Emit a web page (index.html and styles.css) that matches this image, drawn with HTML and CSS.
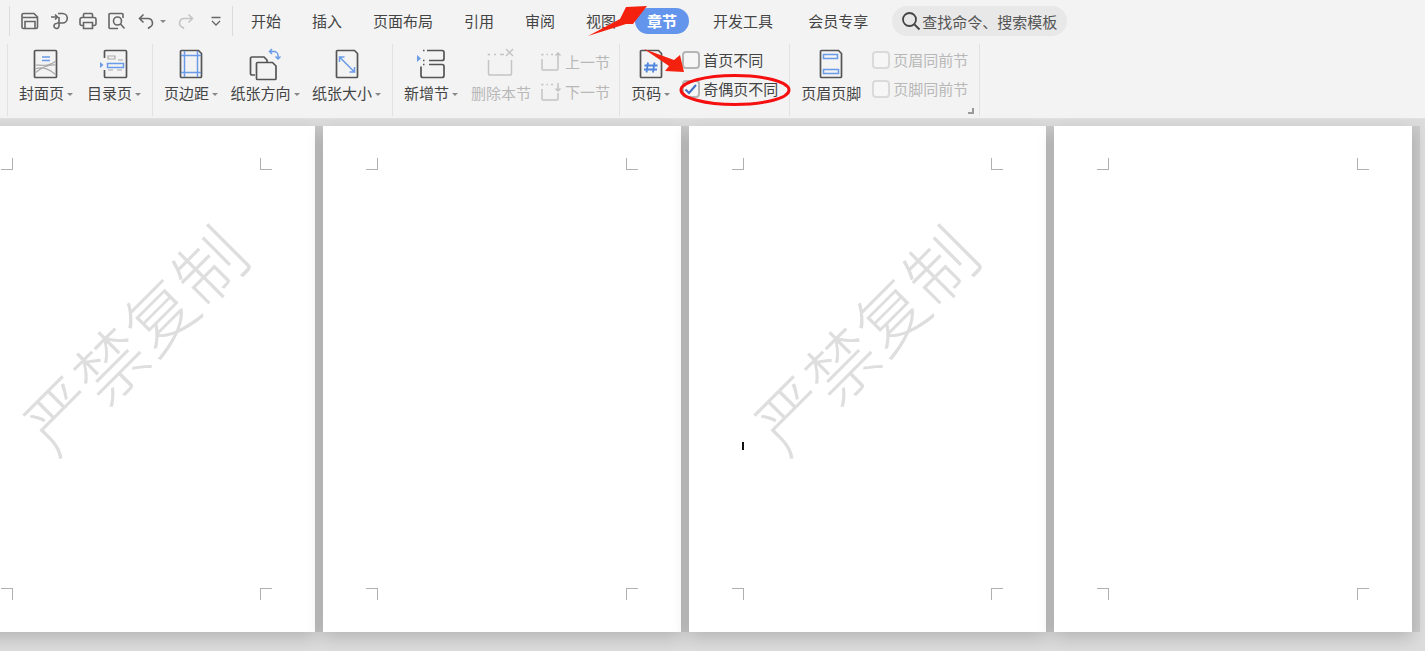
FILE: index.html
```html
<!doctype html>
<html lang="zh-CN">
  <head>
    <meta charset="UTF-8" />
    <title>章节 - 文档</title>
    <link rel="stylesheet" href="styles.css">
  </head>
  <body>
    <header class="ribbon">
      <div class="topbar">
        <div class="quick-access">
          <svg class="qa-icon" viewBox="0 0 18 18"><path d="M2.5 1.5h10.5l3.5 3.500v10a1.500 1.500 0 0 1-1.500 1.500h-12.500a1.500 1.500 0 0 1-1.500-1.500v-12a1.500 1.500 0 0 1 1.500-1.500z"/><path d="M1.500 5.500h15M4 16.500v-7h10v7"/></svg>
          <svg class="qa-icon" viewBox="0 0 18 18"><path d="M1 5h6M5 2.500l2.500 2.500-2.500 2.500M8 1.500h4.500a4.500 4.500 0 0 1 0 9.500h-5.500M9 5v9a2.500 2.500 0 1 1-2-2.500"/></svg>
          <svg class="qa-icon" viewBox="0 0 18 18"><path d="M4.500 5.500v-3a1 1 0 0 1 1-1h7a1 1 0 0 1 1 1v3M4 13.500h-1a2 2 0 0 1-2-2v-4a2 2 0 0 1 2-2h12a2 2 0 0 1 2 2v4a2 2 0 0 1-2 2h-1M4.500 10.500h9v6h-9z"/></svg>
          <svg class="qa-icon" viewBox="0 0 18 18"><path d="M15 6v-3.500a1 1 0 0 0-1-1h-12a1 1 0 0 0-1 1v13a1 1 0 0 0 1 1h8"/><circle cx="9.500" cy="9" r="4"/><path d="M12.500 12l4 4.500"/></svg>
          <svg class="qa-icon" viewBox="0 0 18 18"><path d="M6.500 2.500l-4 4 4 4M3 6.500h8a4.500 4.500 0 0 1 2 8.500l-2 1.500"/></svg>
          <span class="caret caret-undo"></span>
          <svg class="qa-icon qa-off" viewBox="0 0 18 18"><path d="M11.500 2.500l4 4-4 4M15 6.500h-8a4.500 4.500 0 0 0-2 8.500l2 1.500"/></svg>
          <svg class="qa-icon qa-more" viewBox="0 0 18 18"><path d="M4.500 5.500h9M5 9l4 4 4-4"/></svg>
        </div>
        <nav class="tabs">
          <a class="tab">开始</a>
          <a class="tab">插入</a>
          <a class="tab">页面布局</a>
          <a class="tab">引用</a>
          <a class="tab">审阅</a>
          <a class="tab">视图</a>
          <a class="tab tab-active">章节</a>
          <a class="tab tab-dev">开发工具</a>
          <a class="tab tab-vip">会员专享</a>
        </nav>
        <div class="search">
          <svg width="20" height="20" viewBox="0 0 20 20" class="search-icon"><circle cx="8.500" cy="8.500" r="6.500"/><path d="M13.500 13.500l5 5"/></svg>
          <span>查找命令、搜索模板</span>
        </div>
      </div>

      <div class="tools">
        <section class="group group-first">
          <div class="tool">
            <div class="tool-icon">
              <svg width="26" height="30" viewBox="0 0 26 30"><path class="ln" d="M2.500 1.500h20a1 1 0 0 1 1 1v25a1 1 0 0 1-1 1h-20a1 1 0 0 1-1-1v-25a1 1 0 0 1 1-1z"/><path class="bl" d="M9 8h8M9 11.500h8"/><path class="gr" d="M2 16c6 0 14 2 21-4M2 20c8-3 14 0 21 6M2 24c6-5 14-9 21-8"/></svg>
            </div>
            <div class="tool-label">封面页<span class="caret"></span></div>
          </div>
          <div class="tool">
            <div class="tool-icon">
              <svg width="28" height="30" viewBox="0 0 28 30"><path class="ln" d="M4.500 9v-6.500a1 1 0 0 1 1-1h20a1 1 0 0 1 1 1v25a1 1 0 0 1-1 1h-20a1 1 0 0 1-1-1v-6.500"/><path class="gr" d="M8 7h7v3h-7zM18 11h5M8 21h5M17 21h5"/><path class="bl" d="M7.500 14.500h16v4h-16z"/><path class="fill-bl" d="M0 13l3.500 3-3.500 3z"/></svg>
            </div>
            <div class="tool-label">目录页<span class="caret"></span></div>
          </div>
        </section>

        <section class="group group-paper">
          <div class="tool">
            <div class="tool-icon">
              <svg width="24" height="30" viewBox="0 0 24 30"><path class="ln" d="M2.500 1.500h17l3 3v23a1 1 0 0 1-1 1h-19a1 1 0 0 1-1-1v-25a1 1 0 0 1 1-1z"/><path class="bl" d="M5.500 2v26M18.500 2v26M2 6.500h20M2 23.500h20"/></svg>
            </div>
            <div class="tool-label">页边距<span class="caret"></span></div>
          </div>
          <div class="tool">
            <div class="tool-icon">
              <svg width="32" height="34" viewBox="0 0 32 34"><path class="ln" d="M6 28h-3a1.500 1.500 0 0 1-1.500-1.500v-15a1.500 1.500 0 0 1 1.500-1.500h12l3 3v2"/><path class="ln" d="M8.500 15.500h15l3.500 3.500v12.500a1 1 0 0 1-1 1h-17.500a1 1 0 0 1-1-1v-15a1 1 0 0 1 1-1z"/><path class="bl" d="M21 4.500h4a4 4 0 0 1 4 4v3M23 2l-2.500 2.500 2.500 2.500M26.500 9.500l2.500 2.500 2.500-2.500"/></svg>
            </div>
            <div class="tool-label">纸张方向<span class="caret"></span></div>
          </div>
          <div class="tool">
            <div class="tool-icon">
              <svg width="24" height="30" viewBox="0 0 24 30"><path class="ln" d="M2.500 1.500h17l3 3v23a1 1 0 0 1-1 1h-19a1 1 0 0 1-1-1v-25a1 1 0 0 1 1-1z"/><path class="bl" d="M4.500 8l15 15M4.500 13v-5h5M19.500 18v5h-5"/></svg>
            </div>
            <div class="tool-label">纸张大小<span class="caret"></span></div>
          </div>
        </section>

        <section class="group group-section">
          <div class="tool">
            <div class="tool-icon">
              <svg width="28" height="30" viewBox="0 0 28 30"><path class="ln" d="M10 1.500h15a2 2 0 0 1 2 2v6a2 2 0 0 1-2 2h-13M12 15.500h13a2 2 0 0 1 2 2v9a2 2 0 0 1-2 2h-19a2 2 0 0 1-2-2v-9M6 1.500h1.500M6 11.500h1.500M6 15.500h1.500"/><path class="fill-bl" d="M0 6l4 3.500-4 3.500z"/></svg>
            </div>
            <div class="tool-label">新增节<span class="caret"></span></div>
          </div>
          <div class="tool tool-off">
            <div class="tool-icon icon-up">
              <svg width="28" height="28" viewBox="0 0 28 28"><path class="off" d="M1.500 12v14a1 1 0 0 0 1 1h21a1 1 0 0 0 1-1v-14M1.500 7.500v-1h1.500M7 6.500h2M13 6.500h4M19 1l7 7M26 1l-7 7"/></svg>
            </div>
            <div class="tool-label">删除本节</div>
          </div>
          <div class="mini-col mini-nav">
            <div class="mini mini-off">
              <svg width="21" height="19" viewBox="0 0 21 19"><path class="off" d="M1 7v10a1 1 0 0 0 1 1h14a1 1 0 0 0 1-1v-9M1 3.500v-1h1.500M5.500 2.500h1.500M10 2.500h2M17 9v-8M14.500 3.500l2.500-2.500 2.500 2.500"/></svg>
              <span>上一节</span>
            </div>
            <div class="mini mini-off">
              <svg width="21" height="19" viewBox="0 0 21 19"><path class="off" d="M1 7v10a1 1 0 0 0 1 1h14a1 1 0 0 0 1-1v-6M1 3.500v-1h1.500M5.500 2.500h1.500M10 2.500h2M17 1v8M14.500 6.500l2.500 2.500 2.500-2.500"/></svg>
              <span>下一节</span>
            </div>
          </div>
        </section>

        <section class="group">
          <div class="tool">
            <div class="tool-icon">
              <svg width="24" height="30" viewBox="0 0 24 30"><path class="ln" d="M2.500 1.500h17l3 3v23a1 1 0 0 1-1 1h-19a1 1 0 0 1-1-1v-25a1 1 0 0 1 1-1z"/><path class="bl bl-hash" d="M9 13.500l-1.500 10M15.500 13.500l-1.500 10M5.500 16.500h13M5 20.500h13"/></svg>
            </div>
            <div class="tool-label">页码<span class="caret"></span></div>
          </div>
          <div class="mini-col mini-checks">
            <label class="mini">
              <span class="checkbox"></span>
              <span>首页不同</span>
            </label>
            <label class="mini">
              <span class="checkbox">
                <svg width="14" height="14" viewBox="0 0 14 14"><path class="check" d="M1.500 7.500l3.500 3.500 7-8"/></svg>
              </span>
              <span>奇偶页不同</span>
            </label>
          </div>
        </section>

        <section class="group group-last">
          <div class="tool">
            <div class="tool-icon">
              <svg width="24" height="30" viewBox="0 0 24 30"><path class="ln" d="M2.500 1.500h17l3 3v23a1 1 0 0 1-1 1h-19a1 1 0 0 1-1-1v-25a1 1 0 0 1 1-1z"/><path class="bl" d="M4.500 5.500h14v4h-14zM4.500 20.500h15v4h-15z"/></svg>
            </div>
            <div class="tool-label">页眉页脚</div>
          </div>
          <div class="mini-col mini-checks mini-last">
            <label class="mini mini-off">
              <span class="checkbox checkbox-off"></span>
              <span>页眉同前节</span>
            </label>
            <label class="mini mini-off">
              <span class="checkbox checkbox-off"></span>
              <span>页脚同前节</span>
            </label>
          </div>
          <span class="launcher"></span>
        </section>
      </div>
    </header>

    <main class="workspace">
      <div class="page">
        <div class="mark-row"><i class="mark mark-tl"></i><i class="mark mark-tr"></i></div>
        <div class="watermark">严禁复制</div>
        <div class="mark-row"><i class="mark mark-bl"></i><i class="mark mark-br"></i></div>
      </div>
      <div class="page">
        <div class="mark-row"><i class="mark mark-tl"></i><i class="mark mark-tr"></i></div>
        <div class="mark-row"><i class="mark mark-bl"></i><i class="mark mark-br"></i></div>
      </div>
      <div class="page">
        <div class="mark-row"><i class="mark mark-tl"></i><i class="mark mark-tr"></i></div>
        <div class="watermark">严禁复制</div>
        <div class="text-cursor"></div>
        <div class="mark-row"><i class="mark mark-bl"></i><i class="mark mark-br"></i></div>
      </div>
      <div class="page">
        <div class="mark-row"><i class="mark mark-tl"></i><i class="mark mark-tr"></i></div>
        <div class="mark-row"><i class="mark mark-bl"></i><i class="mark mark-br"></i></div>
      </div>
    </main>

    <!-- red hand-drawn annotations on top of the ribbon -->
    <svg class="annotations" width="1425" height="118" viewBox="0 0 1425 118">
      <polygon points="588,36 620,19 626,7 647,6 633,24 626,24" fill="#f5210f"/>
      <polygon points="644,49 674,60 680,55 684,72 665,71 669,66" fill="#f5210f"/>
      <ellipse cx="735" cy="90" rx="54" ry="14.500" fill="none" stroke="#f50f0f" stroke-width="3"/>
    </svg>
  </body>
</html>
```

FILE: styles.css
```css
* {
  margin: 0;
  padding: 0;
  box-sizing: border-box;
}

body {
  position: relative;
  width: 1425px;
  height: 651px;
  overflow: hidden;
  font-family: "Noto Sans CJK SC", "Noto Sans", sans-serif;
  font-size: 15px;
  color: #444;
  background: #dcdcdc;
}

.ribbon {
  height: 119px;
  background: #f3f3f3;
  border-bottom: 1px solid #e2e2e2;
}

.topbar {
  display: flex;
  align-items: center;
  height: 42px;
  margin-bottom: 2px;
  padding-left: 9px;
}

.quick-access {
  display: flex;
  align-items: center;
  gap: 11px;
  height: 30px;
  padding-left: 11px;
  padding-right: 7px;
  border-left: 1px solid #dcdcdc;
  border-right: 1px solid #dcdcdc;
}

.qa-icon {
  display: block;
  width: 18px;
  height: 18px;
  fill: none;
  stroke: #666;
  stroke-width: 1.6;
}

.qa-off {
  stroke: #c4c4c4;
}

.qa-more {
  margin-left: 1px;
  stroke-width: 1.3;
}

.caret {
  display: inline-block;
  width: 0;
  height: 0;
  margin-left: 3px;
  vertical-align: 3px;
  border-top: 3px solid #888;
  border-left: 3px solid transparent;
  border-right: 3px solid transparent;
}

.caret-undo {
  margin-left: -6px;
  vertical-align: 0;
}

.tabs {
  display: flex;
  align-items: center;
  gap: 7px;
  margin-left: 6px;
}

.tab {
  padding: 0 12px;
  height: 26px;
  line-height: 26px;
  border-radius: 13px;
  color: #444;
}

.tab-active {
  background: #6495ec;
  color: white;
  font-weight: 700;
}

.tab-dev {
  margin-left: 5px;
}

.tab-vip {
  margin-left: 4px;
}

.search {
  display: flex;
  align-items: center;
  gap: 1px;
  width: 175px;
  height: 30px;
  margin-left: 12px;
  padding-left: 9px;
  border-radius: 15px;
  background: #e8e8e8;
  color: #555;
  white-space: nowrap;
}

.search-icon {
  flex-shrink: 0;
  fill: none;
  stroke: #444;
  stroke-width: 1.8;
}

.tools {
  display: flex;
  height: 72px;
  margin-left: 7px;
}

.group {
  position: relative;
  display: flex;
  gap: 13px;
  padding: 0 11px;
  border-right: 1px solid #e2e2e2;
}

.group-first {
  gap: 14px;
  border-left: 1px solid #e2e2e2;
}

.group-paper {
  gap: 12.500px;
}

.group-section {
  padding-right: 9px;
}

.tool {
  display: flex;
  flex-direction: column;
  align-items: center;
  padding-top: 2px;
  white-space: nowrap;
}

.tool-icon {
  display: flex;
  align-items: center;
  justify-content: center;
  height: 36px;
}

.icon-up {
  padding-bottom: 4px;
}

.tool-label {
  height: 22px;
  line-height: 22px;
}

.tool-off {
  color: #b8b8b8;
}

.mini-col {
  display: flex;
  flex-direction: column;
  padding-top: 2px;
}

.mini-nav {
  margin-left: -3px;
}

.mini-checks {
  margin-left: -1px;
  padding-top: 1px;
}

.mini-last {
  margin-left: -2px;
}

.mini {
  display: flex;
  align-items: center;
  gap: 3px;
  height: 30px;
  white-space: nowrap;
}

.mini-checks .mini {
  height: 29px;
}

.mini-off {
  color: #b8b8b8;
}

.checkbox {
  display: flex;
  align-items: center;
  justify-content: center;
  width: 18px;
  height: 18px;
  border: 2px solid #b5b5b5;
  border-radius: 4px;
  background: #f6f6f6;
}

.checkbox-off {
  border-color: #dadada;
}

.launcher {
  position: absolute;
  right: 5px;
  bottom: 2px;
  width: 6px;
  height: 6px;
  border-right: 2px solid #999;
  border-bottom: 2px solid #999;
}

.ln,
.gr,
.bl,
.off,
.check {
  fill: none;
}

.ln {
  stroke: #555;
  stroke-width: 1.700;
}

.gr {
  stroke: #aaa;
  stroke-width: 1.200;
}

.bl {
  stroke: #6a9be8;
  stroke-width: 1.500;
}

.bl-hash {
  stroke: #4f86e0;
  stroke-width: 1.800;
}

.off {
  stroke: #c4c4c4;
  stroke-width: 1.500;
}

.check {
  stroke: #3f6fc4;
  stroke-width: 2;
}

.fill-bl {
  fill: #6a9be8;
}

.workspace {
  display: flex;
  gap: 8px;
  height: 532px;
  margin-left: -42.500px;
  padding-top: 7px;
}

.page {
  position: relative;
  display: flex;
  flex-direction: column;
  justify-content: space-between;
  flex-shrink: 0;
  width: 357.500px;
  height: 506px;
  padding: 32px 43px;
  background: white;
  box-shadow:
    8px 0 0 rgba(0, 0, 0, 0.08),
    0 6px 16px rgba(0, 0, 0, 0.18);
}

.mark-row {
  display: flex;
  justify-content: space-between;
}

.mark {
  display: block;
  width: 12px;
  height: 12px;
  border: 0 solid #b0b0b0;
}

.mark-tl {
  border-right-width: 1px;
  border-bottom-width: 1px;
}

.mark-tr {
  border-left-width: 1px;
  border-bottom-width: 1px;
}

.mark-bl {
  border-right-width: 1px;
  border-top-width: 1px;
}

.mark-br {
  border-left-width: 1px;
  border-top-width: 1px;
}

.watermark {
  position: absolute;
  left: 50%;
  top: 212px;
  margin-left: -3px;
  transform: translate(-50%, -50%) rotate(-45deg);
  font-size: 70px;
  font-weight: 300;
  line-height: 1;
  color: #dedede;
  white-space: nowrap;
}

.text-cursor {
  position: absolute;
  left: 53.500px;
  top: 316px;
  width: 2px;
  height: 8px;
  background: #111;
}

.annotations {
  position: absolute;
  top: 0;
  left: 0;
  pointer-events: none;
}
```
